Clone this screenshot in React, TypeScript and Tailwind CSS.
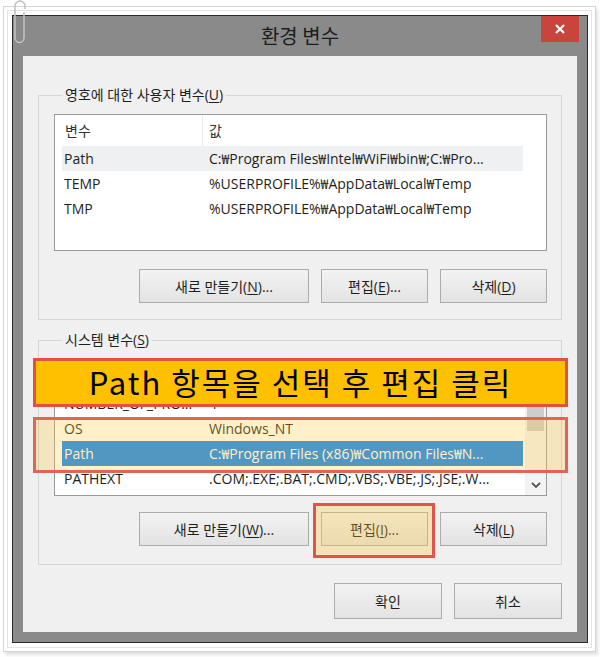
import { ReactNode } from 'react'

const font = "font-['Open_Sans','Noto_Sans_CJK_KR',sans-serif]"
const krFont = "font-['Noto_Sans_CJK_KR',sans-serif]"

interface Row {
  name: string
  value: string
  state?: 'hover' | 'selected'
}

const userRows: Row[] = [
  { name: 'Path', value: 'C:₩Program Files₩Intel₩WiFi₩bin₩;C:₩Pro...', state: 'hover' },
  { name: 'TEMP', value: '%USERPROFILE%₩AppData₩Local₩Temp' },
  { name: 'TMP', value: '%USERPROFILE%₩AppData₩Local₩Temp' },
]

const systemRows: Row[] = [
  { name: 'NUMBER_OF_PRO...', value: '4' },
  { name: 'OS', value: 'Windows_NT' },
  { name: 'Path', value: 'C:₩Program Files (x86)₩Common Files₩N...', state: 'selected' },
  { name: 'PATHEXT', value: '.COM;.EXE;.BAT;.CMD;.VBS;.VBE;.JS;.JSE;.W...' },
]

function Key({ children }: { children: ReactNode }) {
  return <span className="underline underline-offset-2">{children}</span>
}

function Btn({ children, className = '' }: { children: ReactNode; className?: string }) {
  return (
    <button
      className={`flex h-[34px] items-center justify-center border border-[#acacac] bg-gradient-to-b from-[#f2f2f2] to-[#e3e3e3] text-[14px] text-[#1e1e1e] ${className}`}
    >
      {children}
    </button>
  )
}

// header labels are left out when the list header is hidden under the banner
function VarList({ rows, scroll, header = true }: { rows: Row[]; scroll?: boolean; header?: boolean }) {
  return (
    <div className="flex h-[137px] w-[493px] border border-[#9a9a9a] bg-white">
      <div className="flex w-[468px] flex-col pl-[7px]">
        <div className="flex h-[31px] items-center text-[14px] text-[#333]">
          <div className="w-[140px] pl-[3px]">{header && '변수'}</div>
          <div className="h-full w-px bg-[#ececec]" />
          <div className="pl-[6px]">{header && '값'}</div>
        </div>
        {rows.map((r) => (
          <div
            key={r.name + r.value}
            className={`flex h-[25px] items-center whitespace-nowrap text-[14px] ${
              r.state === 'selected'
                ? 'bg-[#0f84f5] text-white'
                : r.state === 'hover'
                  ? 'bg-[#eef0f2] text-[#1e1e1e]'
                  : 'text-[#1e1e1e]'
            }`}
          >
            <div className="w-[141px] overflow-hidden pl-[2px]">{r.name}</div>
            <div className="overflow-hidden pl-[6px]">{r.value}</div>
          </div>
        ))}
      </div>
      {scroll && (
        <div className="ml-auto flex w-[21px] flex-col items-center bg-[#f3f3f3]">
          <div className="mt-[33px] h-[38px] w-[17px] bg-[#cdcdcd]" />
          <svg className="mt-auto mb-[6px]" width="10" height="8" viewBox="0 0 10 8">
            <path d="M1 2l4 4 4-4" fill="none" stroke="#555" strokeWidth="1.8" />
          </svg>
        </div>
      )}
    </div>
  )
}

export default function App() {
  return (
    <div className={`relative h-[657px] w-[600px] overflow-hidden bg-white pt-[6px] pl-[3px] ${font}`}>
      <div className="h-[646px] w-[593px] border border-[#d4d4d4] bg-white pt-[8px] pl-[8px] shadow-[inset_0_0_0_3px_#fff,inset_0_0_0_4px_#e4e4e4,2px_3px_3px_rgba(0,0,0,0.12)]">
        {/* window */}
        <div className="flex h-[628px] w-[576px] flex-col border border-[#2b2b2b] bg-[#8a8a8a]">
          <div className="grid h-[40px] grid-cols-[1fr_auto_1fr] items-center">
            <div />
            <div className={`text-[20px] text-[#1c1c1c] ${krFont}`}>환경 변수</div>
            <div className="flex h-full justify-end pr-[8px]">
              <div className="flex h-[26px] w-[38px] items-center justify-center bg-[#c8443d]">
                <svg width="10" height="10" viewBox="0 0 10 10">
                  <path d="M1 1l8 8M9 1l-8 8" stroke="#fff" strokeWidth="2.2" />
                </svg>
              </div>
            </div>
          </div>
          <div className="px-[10px] pb-[10px]">
            <div className="flex h-[576px] flex-col bg-[#f0f0f0] px-[15px] pt-[29px]">
              <fieldset className="border border-[#d6d6d6] pr-[14px] pb-[16px] pl-[15px]">
                <legend className="ml-[8px] px-[3px] text-[14px] leading-[20px] text-[#1e1e1e]">
                  영호에 대한 사용자 변수(<Key>U</Key>)
                </legend>
                <div className="mt-[9px]">
                  <VarList rows={userRows} />
                </div>
                <div className="mt-[18px] flex justify-end gap-[12px]">
                  <Btn className="w-[170px]">
                    새로 만들기(<Key>N</Key>)...
                  </Btn>
                  <Btn className="w-[107px]">
                    편집(<Key>E</Key>)...
                  </Btn>
                  <Btn className="w-[107px]">
                    삭제(<Key>D</Key>)
                  </Btn>
                </div>
              </fieldset>

              <fieldset className="mt-[10px] border border-[#d6d6d6] pr-[14px] pb-[18px] pl-[15px]">
                <legend className="ml-[8px] px-[3px] text-[14px] leading-[20px] text-[#1e1e1e]">
                  시스템 변수(<Key>S</Key>)
                </legend>
                <div className="mt-[9px]">
                  <VarList rows={systemRows} scroll header={false} />
                </div>
                <div className="mt-[16px] flex justify-end gap-[12px]">
                  <Btn className="w-[170px]">
                    새로 만들기(<Key>W</Key>)...
                  </Btn>
                  <Btn className="w-[107px]">
                    편집(<Key>I</Key>)...
                  </Btn>
                  <Btn className="w-[107px]">
                    삭제(<Key>L</Key>)
                  </Btn>
                </div>
              </fieldset>

              <div className="mt-[18px] flex justify-end gap-[12px]">
                <Btn className="h-[36px] w-[108px] border-[#3c7fb1]">확인</Btn>
                <Btn className="h-[36px] w-[108px]">취소</Btn>
              </div>
            </div>
          </div>
        </div>
      </div>

      {/* paper clip */}
      <svg className="absolute top-0 left-[12px]" width="18" height="48" viewBox="0 0 18 48">
        <path
          d="M12 12 V38 a4.5 4.5 0 0 1 -9 0 V6 a5 5 0 0 1 10 0 V9"
          fill="none"
          stroke="#a8a8a8"
          strokeWidth="1.4"
        />
        <path d="M12 12 V38 a4.5 4.5 0 0 1 -9 0 V6 a5 5 0 0 1 10 0 V9" fill="none" stroke="#f4f4f4" strokeWidth="0.5" />
      </svg>

      {/* annotation overlays */}
      <div className="absolute top-[358px] left-[33px] flex h-[49px] w-[535px] items-center justify-center border-[3px] border-[#e3503e] bg-[#ffc000]">
        <span className={`text-[31px] tracking-[2px] text-black ${krFont}`}>Path 항목을 선택 후 편집 클릭</span>
      </div>
      <div className="absolute top-[417px] left-[33px] h-[56px] w-[535px] border-[3px] border-[#e26458] bg-[rgba(255,200,60,0.28)]" />
      <div className="absolute top-[503px] left-[313px] h-[55px] w-[122px] border-[3px] border-[#e0554a] bg-[rgba(255,200,60,0.3)]" />
    </div>
  )
}
